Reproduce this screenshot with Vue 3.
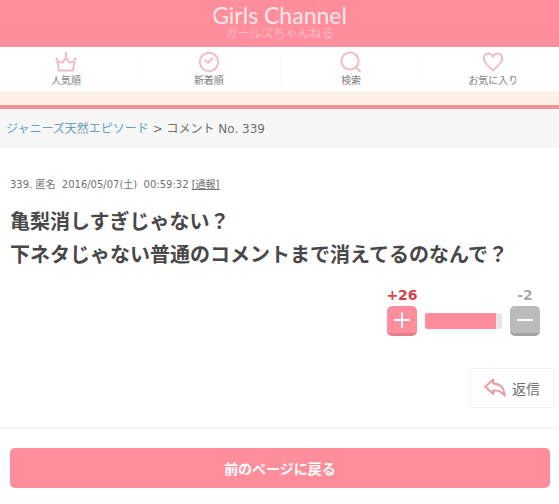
<script setup>
const navItems = [
  { id: 'popular', label: '人気順' },
  { id: 'newest', label: '新着順' },
  { id: 'search', label: '検索' },
  { id: 'favorite', label: 'お気に入り' },
]
const plus = 26
const minus = 2
const plusShare = Math.floor((plus / (plus + minus)) * 100)
</script>

<template>
  <div class="page">
    <header class="header">
      <a class="logo" href="#">
        <span class="logo-main">Girls Channel</span>
        <span class="logo-sub">ガールズちゃんねる</span>
      </a>
    </header>

    <nav class="nav">
      <a v-for="item in navItems" :key="item.id" class="nav-item" href="#">
        <svg class="nav-icon" viewBox="0 0 22 22" aria-hidden="true">
          <template v-if="item.id === 'popular'">
            <path d="M4 19.6Q3.6 14.5 2.2 10.4L7.4 11.6 11 6.5 14.6 11.6 19.8 10.4Q18.4 14.5 18 19.6Z" />
            <path d="M11 2.8V6.5" />
            <circle class="dot" cx="11" cy="2.4" r="1.4" />
            <circle class="dot" cx="1.8" cy="8" r="1.5" />
            <circle class="dot" cx="20.2" cy="8" r="1.5" />
          </template>
          <template v-else-if="item.id === 'newest'">
            <circle cx="11" cy="11" r="9.2" />
            <path d="M7 9.2 10.2 11.8 14.3 7.4" />
          </template>
          <template v-else-if="item.id === 'search'">
            <circle cx="10" cy="10" r="8.6" />
            <path d="M16 16.5 20 20.5" />
          </template>
          <path
            v-else
            d="M11 19.5C7.5 16 1.7 11.6 1.7 7.4 1.7 4.4 3.9 2.5 6.3 2.5 8.4 2.5 10.1 3.8 11 5.8 11.9 3.8 13.6 2.5 15.7 2.5 18.1 2.5 20.3 4.4 20.3 7.4 20.3 11.6 14.5 16 11 19.5Z"
          />
        </svg>
        <span>{{ item.label }}</span>
      </a>
    </nav>

    <div class="band"></div>

    <div class="breadcrumb">
      <a href="#">ジャニーズ天然エピソード</a> &gt; コメント No. 339
    </div>

    <main>
      <article class="comment">
        <p class="meta">339. 匿名&nbsp; 2016/05/07(土)&nbsp; 00:59:32 <a href="#">[通報]</a></p>
        <p class="body">亀梨消しすぎじゃない？<br />下ネタじゃない普通のコメントまで消えてるのなんで？</p>

        <div class="votes">
          <div class="vote">
            <span class="count plus">+{{ plus }}</span>
            <button class="vote-button plus" type="button" aria-label="プラス">
              <svg viewBox="0 0 30 28" aria-hidden="true"><path d="M8 14H22M15 7V21" /></svg>
            </button>
          </div>
          <div class="meter"><div class="meter-fill" :style="{ width: plusShare + '%' }"></div></div>
          <div class="vote">
            <span class="count minus">-{{ minus }}</span>
            <button class="vote-button minus" type="button" aria-label="マイナス">
              <svg viewBox="0 0 30 28" aria-hidden="true"><path d="M8 14H22" /></svg>
            </button>
          </div>
        </div>
      </article>

      <div class="reply-row">
        <button class="reply" type="button">
          <svg class="reply-icon" viewBox="0 0 22 20" aria-hidden="true">
            <path d="M1.2 8.7 9.2 1.6V5.4C16 5.8 20.3 10 20.8 17.8 18 13.8 14.5 12.2 9.2 12.2V16Z" />
          </svg>
          <span>返信</span>
        </button>
      </div>

      <div class="back-row">
        <a class="back" href="#">前のページに戻る</a>
      </div>
    </main>
  </div>
</template>

<style>
body {
  margin: 0;
  background: #fff;
}
</style>

<style scoped>
.page {
  overflow: hidden;
  background: #fff;
  color: #707070;
  font-family: "DejaVu Sans", "Noto Sans CJK JP", sans-serif;
  font-size: 12px;
}

a {
  color: inherit;
  text-decoration: none;
}

p {
  margin: 0;
}

button {
  padding: 0;
  font: inherit;
  cursor: pointer;
}

svg {
  fill: none;
  stroke-linecap: round;
  stroke-linejoin: round;
}

.header {
  display: flex;
  justify-content: center;
  box-sizing: border-box;
  height: 47px;
  padding-top: 5px;
  border-bottom: 2px solid #f5919d;
  background: #ff8d9b;
}

.logo {
  display: flex;
  flex-direction: column;
  align-items: center;
  color: #ffe9e8;
}

.logo-main {
  font-family: Lato, sans-serif;
  font-size: 23px;
  line-height: 20px;
}

.logo-sub {
  color: #ffd0d2;
  font-family: "Noto Sans CJK JP", sans-serif;
  font-size: 12px;
  font-weight: 300;
  line-height: 16px;
}

.nav {
  display: grid;
  grid-template-columns: repeat(4, 1fr);
  margin: 0 -5px;
  padding: 4px 0;
}

.nav-item {
  display: flex;
  flex-direction: column;
  align-items: center;
  gap: 2px;
  color: #808080;
  font-size: 10px;
  line-height: 12px;
}

.nav-item + .nav-item {
  border-left: 1px solid #fafafa;
}

.nav-icon {
  width: 22px;
  height: 22px;
  stroke: #f3bbc4;
  stroke-width: 2;
}

.nav-icon .dot {
  fill: #f3bbc4;
  stroke: none;
}

.band {
  height: 14px;
  border-bottom: 4px solid #f5919d;
  background: #faf1e7;
}

.breadcrumb {
  padding: 10px 6px 9px;
  background: #f6f6f6;
  line-height: 20px;
}

.breadcrumb a {
  color: #65a3af;
}

.comment {
  padding: 28px 10px 0;
}

.meta {
  font-size: 10px;
  line-height: 18px;
}

.meta a {
  text-decoration: underline;
}

.body {
  margin-top: 10px;
  color: #484848;
  font-family: "Noto Sans CJK JP", sans-serif;
  font-size: 20px;
  font-weight: 700;
  line-height: 33px;
}

.votes {
  display: flex;
  justify-content: flex-end;
  align-items: flex-end;
  gap: 8px;
  margin-top: 17px;
  padding-right: 9px;
}

.vote {
  display: flex;
  flex-direction: column;
  align-items: center;
  gap: 3px;
  width: 30px;
}

.count {
  font-size: 14px;
  font-weight: 700;
  line-height: 16px;
}

.count.plus {
  color: #dc3d49;
}

.count.minus {
  color: #aaa;
}

.vote-button {
  box-sizing: border-box;
  width: 30px;
  height: 30px;
  border: 0;
  border-bottom: 3px solid #e57e8b;
  border-radius: 5px;
  background: #ff8d9b;
}

.vote-button.minus {
  border-bottom-color: #a3a3a3;
  background: #bbb;
}

.vote-button svg {
  display: block;
  width: 30px;
  height: 28px;
  stroke: #fff;
  stroke-width: 2;
}

.meter {
  width: 77px;
  height: 16px;
  margin-bottom: 7px;
  overflow: hidden;
  border-radius: 2px;
  background: #e6e6e6;
}

.meter-fill {
  height: 100%;
  background: #ff8d9b;
}

.reply-row {
  display: flex;
  justify-content: flex-end;
  padding: 32px 5px 19px;
  border-bottom: 1px solid #eee;
}

.reply {
  display: flex;
  align-items: center;
  gap: 6px;
  height: 40px;
  padding: 0 13px;
  border: 1px solid #f3f3f3;
  border-radius: 2px;
  background: #fff;
  color: #707070;
  font-size: 14px;
}

.reply-icon {
  width: 22px;
  height: 20px;
  stroke: #ea9aa6;
  stroke-width: 2;
}

.back-row {
  padding: 20px 9px 16px 10px;
}

.back {
  display: block;
  border-radius: 5px;
  background: #ff8d9b;
  color: #fff;
  font-family: "Noto Sans CJK JP", sans-serif;
  font-size: 14px;
  font-weight: 700;
  line-height: 40px;
  text-align: center;
}
</style>
